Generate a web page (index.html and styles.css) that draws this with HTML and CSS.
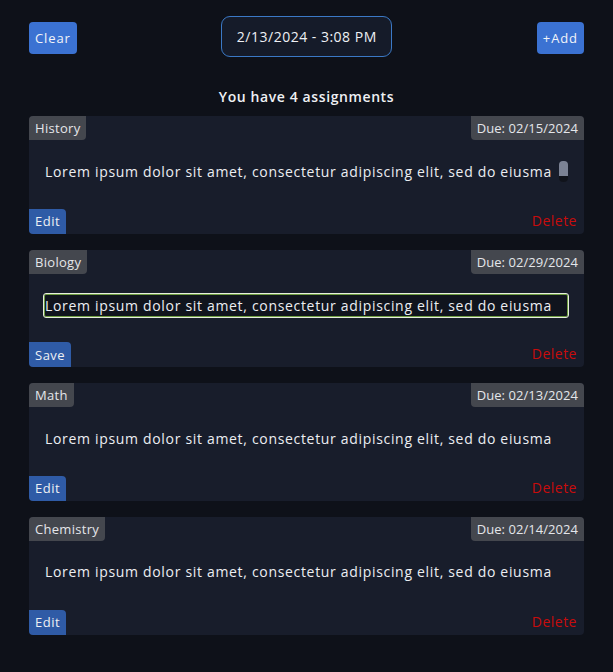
FILE: index.html
```html
<!DOCTYPE html>
<html lang="en">
<head>
<meta charset="utf-8">
<title>Assignments</title>
<link rel="stylesheet" href="styles.css">
</head>
<body>
<div class="app">
  <header class="topbar">
    <button class="btn btn-primary">Clear</button>
    <div class="datetime">2/13/2024 - 3:08 PM</div>
    <button class="btn btn-primary">+Add</button>
  </header>
  <h1 class="count">You have 4 assignments</h1>
  <main class="list">
    <section class="card">
      <div class="card-head">
        <span class="tag tag-subject">History</span>
        <span class="tag tag-due">Due: 02/15/2024</span>
      </div>
      <div class="card-body">
        <span class="desc">Lorem ipsum dolor sit amet, consectetur adipiscing elit, sed do eiusma</span>
        <span class="thumb"></span>
      </div>
      <div class="card-foot">
        <button class="action">Edit</button>
        <span class="delete">Delete</span>
      </div>
    </section>
    <section class="card">
      <div class="card-head">
        <span class="tag tag-subject">Biology</span>
        <span class="tag tag-due">Due: 02/29/2024</span>
      </div>
      <div class="card-body card-body-edit">
        <div class="edit-input">Lorem ipsum dolor sit amet, consectetur adipiscing elit, sed do eiusma</div>
      </div>
      <div class="card-foot">
        <button class="action">Save</button>
        <span class="delete">Delete</span>
      </div>
    </section>
    <section class="card">
      <div class="card-head">
        <span class="tag tag-subject">Math</span>
        <span class="tag tag-due">Due: 02/13/2024</span>
      </div>
      <div class="card-body">
        <span class="desc">Lorem ipsum dolor sit amet, consectetur adipiscing elit, sed do eiusma</span>
      </div>
      <div class="card-foot">
        <button class="action">Edit</button>
        <span class="delete">Delete</span>
      </div>
    </section>
    <section class="card">
      <div class="card-head">
        <span class="tag tag-subject">Chemistry</span>
        <span class="tag tag-due">Due: 02/14/2024</span>
      </div>
      <div class="card-body">
        <span class="desc">Lorem ipsum dolor sit amet, consectetur adipiscing elit, sed do eiusma</span>
      </div>
      <div class="card-foot">
        <button class="action">Edit</button>
        <span class="delete">Delete</span>
      </div>
    </section>
  </main>
</div>
</body>
</html>
```
FILE: styles.css
```css
* { box-sizing: border-box; }
html, body {
  margin: 0;
  padding: 0;
  background: #0e1119;
}
body {
  font-family: "Open Sans", "Noto Sans", sans-serif;
  color: #eceef2;
  height: 672px;
}
.app {
  padding: 16px 29px 0 29px;
}
.topbar {
  display: flex;
  justify-content: space-between;
  align-items: flex-start;
  height: 41px;
}
.btn {
  font-family: inherit;
  border: none;
  border-radius: 4px;
  height: 32px;
  margin-top: 6px;
  padding: 0 6px;
  font-size: 13px;
  letter-spacing: 0.9px;
  color: #f2f4f8;
  cursor: pointer;
}
.btn-primary { background: #3b72d2; }
.datetime {
  height: 41px;
  width: 171px;
  border: 1px solid #3b79c6;
  border-radius: 9px;
  background: #151b29;
  display: flex;
  align-items: center;
  justify-content: center;
  font-size: 14px;
  letter-spacing: 0.5px;
  color: #eef0f4;
}
.count {
  margin: 30px 0 0 0;
  height: 19px;
  font-size: 14px;
  font-weight: 600;
  letter-spacing: 0.6px;
  text-align: center;
  line-height: 19px;
  color: #eef0f4;
}
.list {
  margin-top: 10px;
  display: flex;
  flex-direction: column;
  gap: 16px;
}
.card {
  background: #181d2b;
  border-radius: 4px;
  height: 117.67px;
  display: flex;
  flex-direction: column;
}
.card-head {
  display: flex;
  justify-content: space-between;
  align-items: flex-start;
}
.tag {
  background: #44474e;
  color: #e4e6ea;
  font-size: 13px;
  letter-spacing: 0.3px;
  height: 24px;
  line-height: 24px;
  padding: 0 6px;
}
.tag-due { letter-spacing: 0.05px; }
.tag-subject { border-radius: 4px 0 4px 0; }
.tag-due { border-radius: 0 4px 0 4px; }
.card-body {
  margin: 20px 15px 0 16px;
  height: 22px;
  display: flex;
  align-items: center;
  justify-content: space-between;
}
.desc {
  font-size: 14px;
  letter-spacing: 0.68px;
  color: #eceef2;
  white-space: nowrap;
}
.thumb {
  width: 9px;
  height: 21px;
  border-radius: 4px;
  background: linear-gradient(#7b8294 0, #7b8294 15px, #10131b 15px);
  margin-right: 1px;
}
.card-body-edit {
  margin: 19px 15px 0 14px;
  height: 25px;
}
.edit-input {
  width: 100%;
  height: 25px;
  border: 1px solid #e7eedd;
  box-shadow: inset 0 0 0 1px #6d9c40;
  border-radius: 3px;
  background: #10141d;
  font-size: 14px;
  letter-spacing: 0.68px;
  line-height: 23px;
  padding: 0 1px;
  white-space: nowrap;
  overflow: hidden;
  color: #eceef2;
}
.card-foot {
  margin-top: auto;
  display: flex;
  justify-content: space-between;
  align-items: center;
  height: 25px;
}
.action {
  font-family: inherit;
  border: none;
  background: #2f5ba6;
  color: #eef0f4;
  font-size: 13px;
  letter-spacing: 0.5px;
  height: 25px;
  padding: 0 6px;
  border-radius: 0 4px 0 4px;
}
.delete {
  color: #c80c0c;
  font-size: 14px;
  letter-spacing: 0.5px;
  margin-right: 7px;
  margin-top: -2px;
}
```
